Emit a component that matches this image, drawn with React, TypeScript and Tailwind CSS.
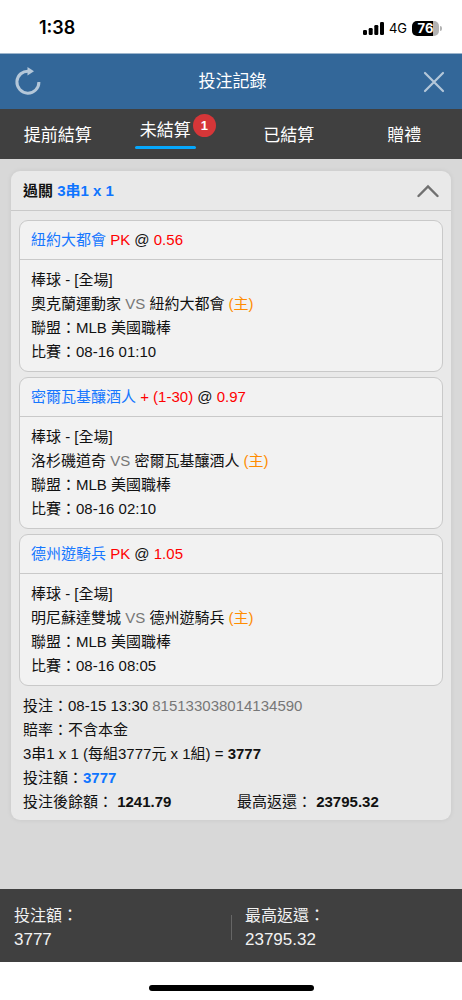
import { useState } from 'react';

type Bet = {
  pick: string;
  line: string;
  odds: string;
  away: string;
  home: string;
  time: string;
};

const bets: Bet[] = [
  { pick: '紐約大都會', line: 'PK', odds: '0.56', away: '奧克蘭運動家', home: '紐約大都會', time: '08-16 01:10' },
  { pick: '密爾瓦基釀酒人', line: '+ (1-30)', odds: '0.97', away: '洛杉磯道奇', home: '密爾瓦基釀酒人', time: '08-16 02:10' },
  { pick: '德州遊騎兵', line: 'PK', odds: '1.05', away: '明尼蘇達雙城', home: '德州遊騎兵', time: '08-16 08:05' },
];

const tabs = [
  { label: '提前結算' },
  { label: '未結算', count: 1 },
  { label: '已結算' },
  { label: '贈禮' },
];

function StatusBar() {
  return (
    <div className="flex h-[53px] items-center justify-between pr-5 pl-[39px] pt-[3px] font-['Inter',sans-serif] text-black">
      <span className="text-lg font-semibold">1:38</span>
      <div className="flex items-center gap-[5px]">
        <svg width="21" height="13" viewBox="0 0 21 13" aria-hidden="true">
          <rect x="0" y="8" width="4" height="5" rx="1.2" />
          <rect x="5.7" y="6" width="4" height="7" rx="1.2" />
          <rect x="11.3" y="3" width="4" height="10" rx="1.2" />
          <rect x="17" y="0" width="4" height="13" rx="1.2" />
        </svg>
        <span className="text-[13px] leading-4">4G</span>
        <div className="flex items-center gap-px">
          <div className="flex h-[15px] w-[27px] items-center justify-center rounded-[5px] bg-[linear-gradient(90deg,#000_76%,#b3b3b3_76%)] text-[13px] leading-none font-bold text-white">
            76
          </div>
          <span className="h-[5px] w-[2px] rounded-r-full bg-[#b3b3b3]" />
        </div>
      </div>
    </div>
  );
}

function Header() {
  return (
    <header className="flex h-14 items-center justify-between border-t border-[#9db5cc] bg-[#336799] pr-[17px] pl-[14px]">
      <button type="button" aria-label="重新整理" className="text-[#b4c7d9]">
        <svg width="28" height="30" viewBox="0 0 28 30" fill="none" aria-hidden="true">
          <path d="M15 4.2A11 11 0 1 0 24.9 15" stroke="currentColor" strokeWidth="3" />
          <path d="M13.5 0 20 4.3 13.5 8.6Z" fill="currentColor" />
        </svg>
      </button>
      <h1 className="text-[17px] leading-6 text-white">投注記錄</h1>
      <button type="button" aria-label="關閉" className="text-[#b4c7d9]">
        <svg width="22" height="22" viewBox="0 0 22 22" fill="none" stroke="currentColor" strokeWidth="2.2" strokeLinecap="round" aria-hidden="true">
          <path d="M2 2 20 20M20 2 2 20" />
        </svg>
      </button>
    </header>
  );
}

function Tabs() {
  const [active, setActive] = useState('未結算');
  return (
    <nav className="grid h-[50px] grid-cols-4 bg-[#404040] text-[17px] leading-6 text-white">
      {tabs.map(({ label, count }) => (
        <button
          key={label}
          type="button"
          onClick={() => setActive(label)}
          className="flex items-center justify-center"
        >
          <span className="relative">
            <span
              className={
                active === label
                  ? 'flex flex-col gap-[3px] px-[5px] after:-mx-[5px] after:h-[3px] after:rounded-full after:bg-[#06a7fb]'
                  : 'block pt-[3px]'
              }
            >
              {label}
            </span>
            {count && (
              <span className="absolute -top-[5px] left-full -ml-[3px] flex size-[23px] items-center justify-center rounded-full bg-[#d63638] text-[13px] leading-none font-bold">
                {count}
              </span>
            )}
          </span>
          {count && <span className="w-4" />}
        </button>
      ))}
    </nav>
  );
}

function BetCard({ bet }: { bet: Bet }) {
  return (
    <article className="rounded-[9px] border border-[#c9c9c9] bg-[#f2f2f2]">
      <h3 className="border-b border-[#c9c9c9] px-[11px] py-[7px]">
        <span className="text-[#1677ff]">{bet.pick}</span>{' '}
        <span className="text-[#ff0000]">{bet.line}</span> @{' '}
        <span className="text-[#ff0000]">{bet.odds}</span>
      </h3>
      <div className="px-[11px] pt-2 pb-[7px]">
        <p>棒球 - [全場]</p>
        <p>
          {bet.away} <span className="text-[#777]">VS</span> {bet.home}{' '}
          <span className="text-[#ff8c00]">(主)</span>
        </p>
        <p>聯盟：MLB 美國職棒</p>
        <p>比賽：{bet.time}</p>
      </div>
    </article>
  );
}

export default function App() {
  const [open, setOpen] = useState(true);
  return (
    <div
      lang="zh-TW"
      className="flex min-h-screen flex-col bg-white font-['Liberation_Sans','Noto_Sans_CJK_TC',sans-serif] text-[15px] leading-6 text-[#111]"
    >
      <StatusBar />
      <Header />
      <Tabs />
      <main className="flex-1 bg-[#d8d8d8] px-[11px] pt-3 pb-5">
        <section className="rounded-[9px] bg-[#e9e9e9] shadow-[0_0_5px_rgba(0,0,0,0.08)]">
          <div className="flex h-10 items-center justify-between border-b border-[#c9c9c9] px-3">
            <h2 className="font-bold">
              過關 <span className="text-[#0f75ff]">3串1 x 1</span>
            </h2>
            <button type="button" aria-label="收合" aria-expanded={open} onClick={() => setOpen(!open)} className="text-[#707070]">
              <svg width="22" height="14" viewBox="0 0 22 14" fill="none" stroke="currentColor" strokeWidth="2.4" strokeLinecap="round" aria-hidden="true">
                <path d="M1.5 12 11 2.5 20.5 12" />
              </svg>
            </button>
          </div>
          {open && (
            <>
              <div className="flex flex-col gap-[5px] px-2 pt-[9px]">
                {bets.map((bet) => (
                  <BetCard key={bet.pick} bet={bet} />
                ))}
              </div>
              <div className="px-3 pt-2 pb-[6px]">
                <p>
                  投注：08-15 13:30 <span className="text-[#777]">815133038014134590</span>
                </p>
                <p>賠率：不含本金</p>
                <p>
                  3串1 x 1 (每組3777元 x 1組) = <b>3777</b>
                </p>
                <p>
                  投注額：<b className="text-[#0f75ff]">3777</b>
                </p>
                <div className="grid grid-cols-2 gap-3">
                  <p>
                    投注後餘額： <b>1241.79</b>
                  </p>
                  <p>
                    最高返還： <b>23795.32</b>
                  </p>
                </div>
              </div>
            </>
          )}
        </section>
      </main>
      <footer className="grid h-[73px] grid-cols-2 items-center bg-[#404040] pt-1 text-base leading-6 text-[#f2f2f2]">
        <div className="px-[14px]">
          <p>投注額：</p>
          <p className="text-[17px]">3777</p>
        </div>
        <div className="flex items-center gap-[13px]">
          <span className="h-[25px] w-px bg-[#666]" />
          <div>
            <p>最高返還：</p>
            <p className="text-[17px]">23795.32</p>
          </div>
        </div>
      </footer>
      <div className="flex h-[38px] items-center justify-center pt-[14px]">
        <span className="h-[6px] w-[165px] rounded-full bg-black" />
      </div>
    </div>
  );
}
